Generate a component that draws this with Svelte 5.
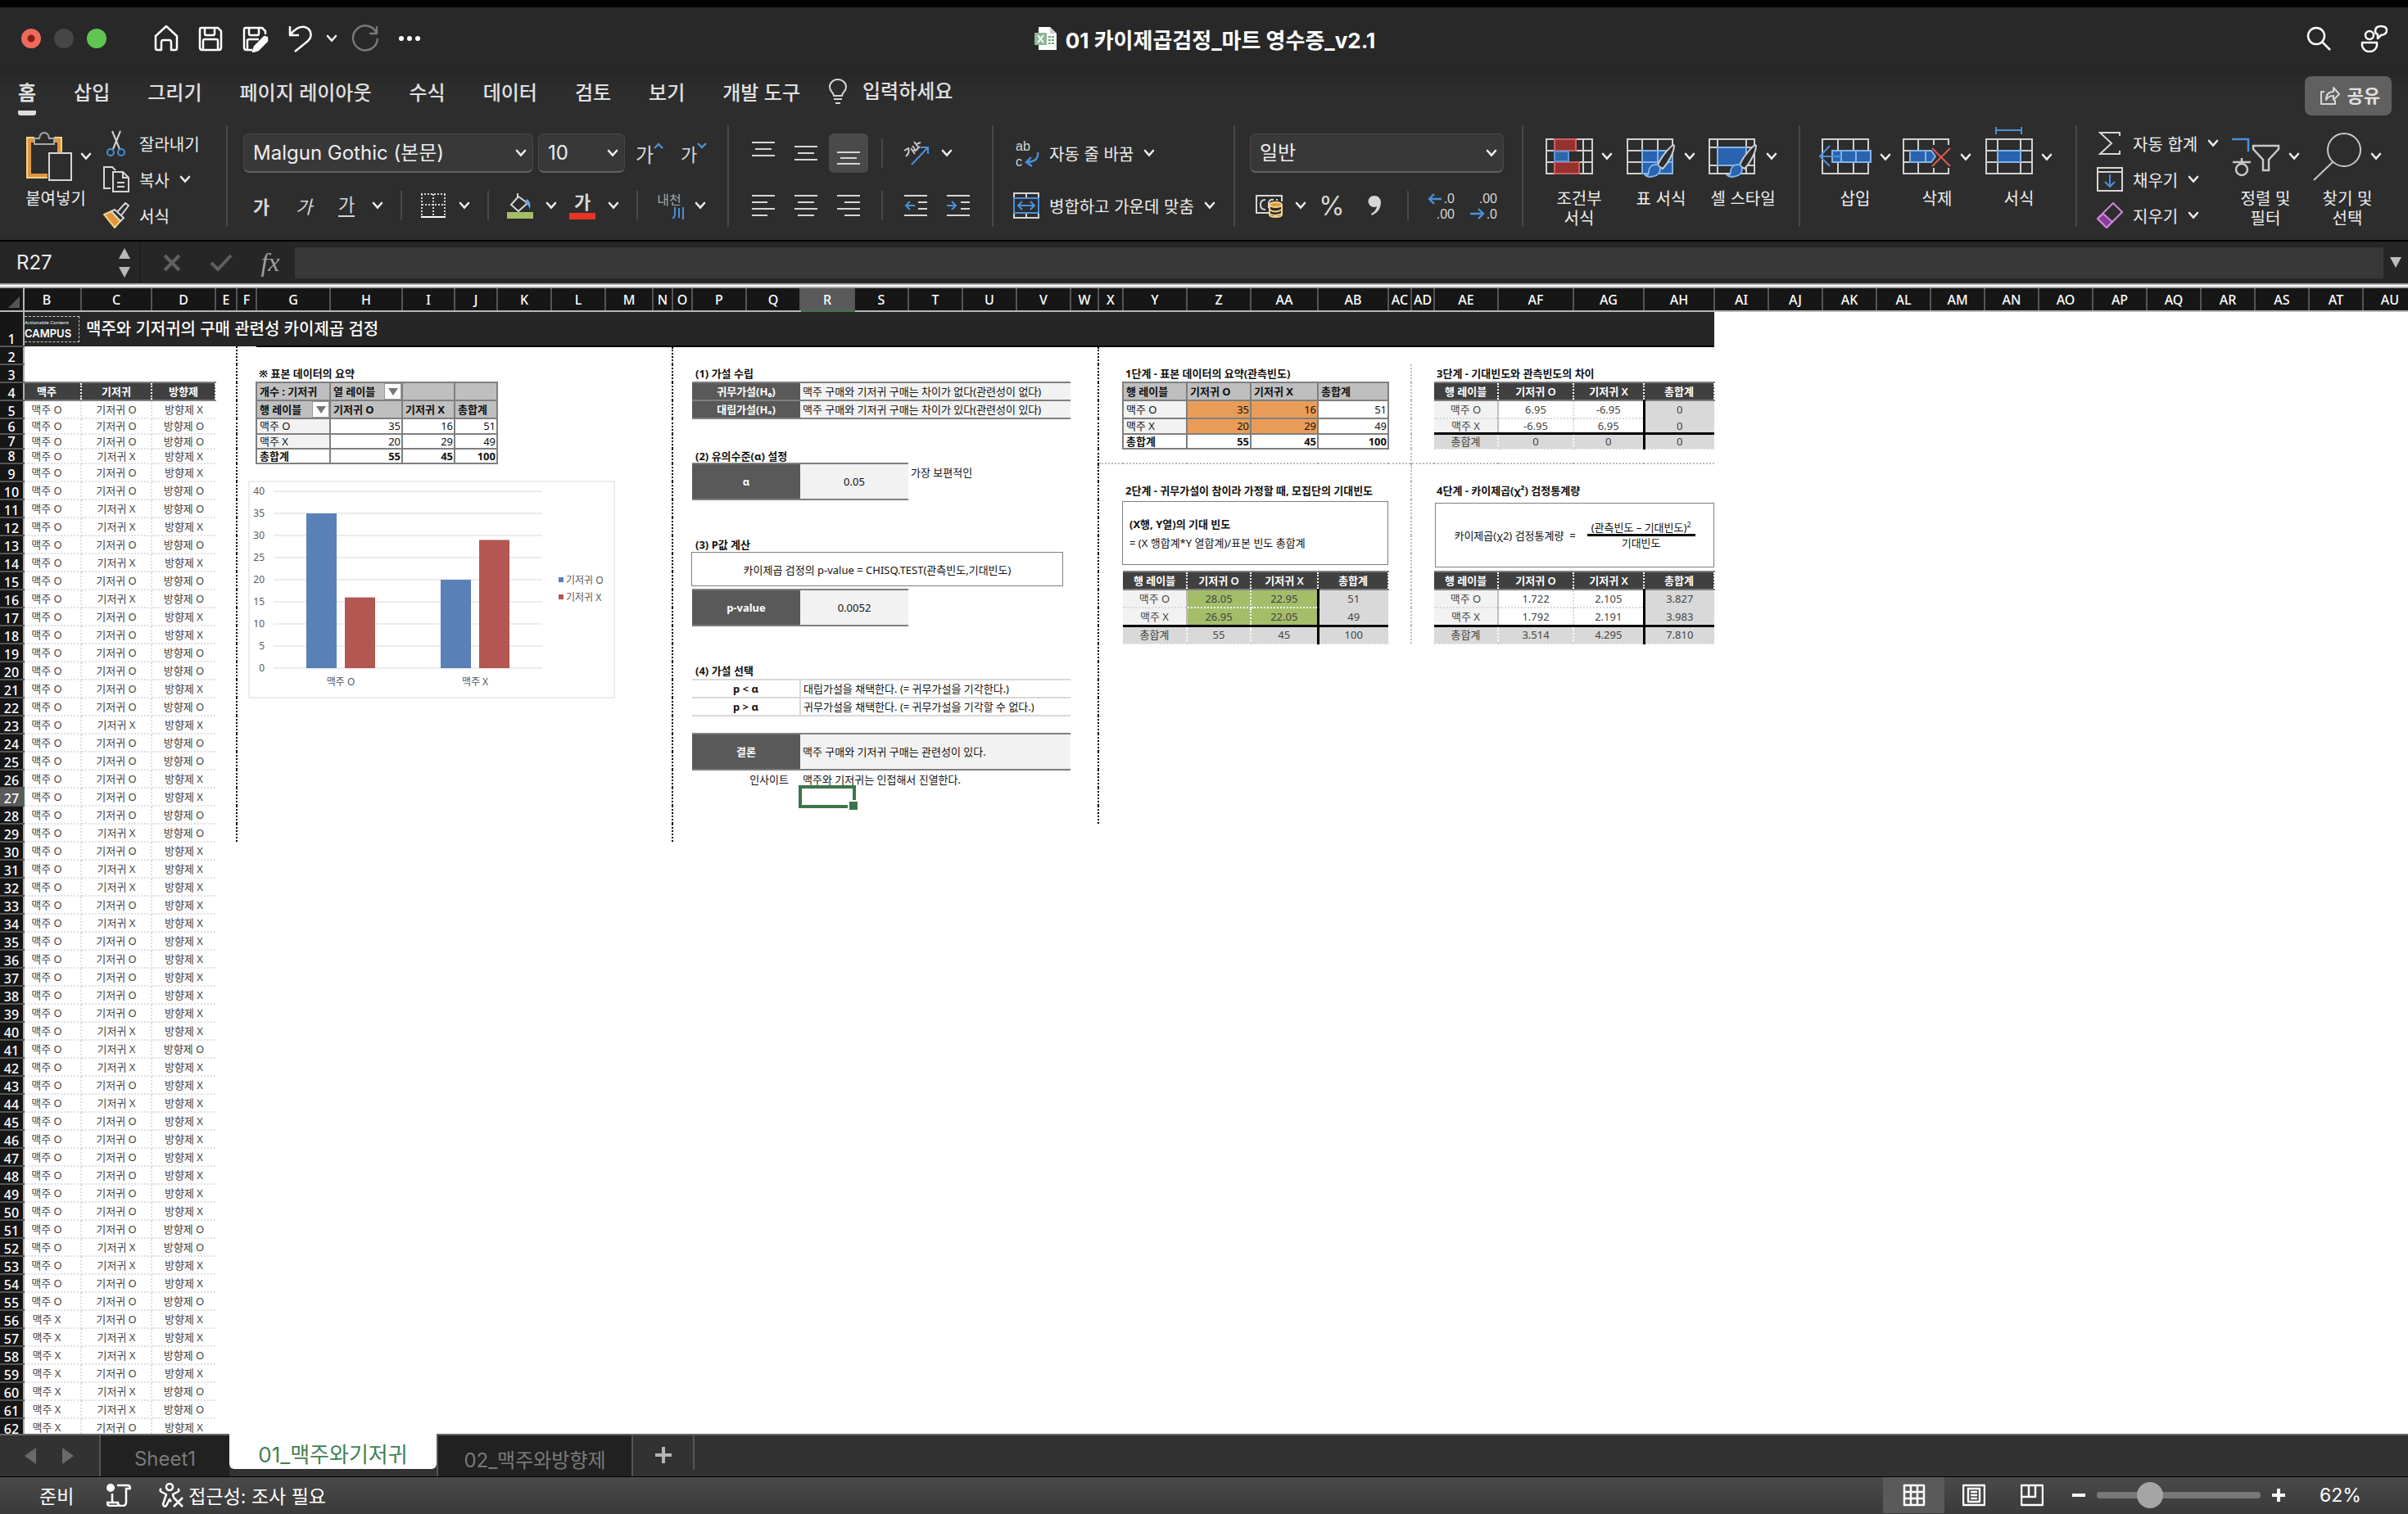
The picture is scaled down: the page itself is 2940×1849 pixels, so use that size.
<script>
  const widths = [
    70, 86, 78, 26, 24, 90, 88, 64, 52, 66, 66, 58, 24, 24, 66, 66, 66, 66, 66,
    66, 66, 34, 30, 78, 78, 82, 86, 28, 28, 78, 92, 86, 86,
    ...Array(13).fill(66),
  ];

  function colName(i) {
    const letter = (n) => String.fromCharCode(65 + n);
    return i < 26 ? letter(i) : letter(Math.floor(i / 26) - 1) + letter(i % 26);
  }

  // column A is scrolled out of view
  const cols = widths.map((w, i) => ({ name: colName(i + 1), w }));
  const colIndex = Object.fromEntries(cols.map((c, i) => [c.name, i]));
  const rows = Array.from({ length: 62 }, (_, i) => i + 1);

  const cells = {};
  const covered = new Set();

  function put(ref, text, cls = "", cs = 1, rs = 1) {
    const [, name, num] = ref.match(/([A-Z]+)(\d+)/);
    cells[ref] = { text, cls, cs, rs };
    for (let r = 0; r < rs; r++) {
      for (let c = 0; c < cs; c++) {
        if (r || c) covered.add(cols[colIndex[name] + c].name + (+num + r));
      }
    }
  }

  function putTable(startCol, startRow, data, styler) {
    data.forEach((line, r) =>
      line.forEach((text, c) =>
        put(cols[colIndex[startCol] + c].name + (startRow + r), text, styler(r, c)),
      ),
    );
  }

  // receipts
  const diapers = "OOOXOOXXOXOXOOOOOOX" + "OOOOOXOXXOXOOOOOXXXOXOOOOOOOXXOOOXXOXXO";
  const fresheners = "XOOXXOOXOXOOXXOOXOX" + "OOXXOOXXXXXXXXXXXOXXXXXXXXXOOXXOXXOXOOX";
  put("B4", "맥주", "dark first");
  put("C4", "기저귀", "dark");
  put("D4", "방향제", "dark");
  for (let i = 0; i < 58; i++) {
    put("B" + (i + 5), "맥주 " + (i < 51 ? "O" : "X"), "data first");
    put("C" + (i + 5), "기저귀 " + diapers[i], "data");
    put("D" + (i + 5), "방향제 " + fresheners[i], "data last");
  }

  // pivot
  put("C1", "맥주와 기저귀의 구매 관련성 카이제곱 검정", "title");
  put("G3", "※ 표본 데이터의 요약", "bold");
  putTable(
    "G",
    4,
    [
      ["개수 : 기저귀", "열 레이블", "", ""],
      ["행 레이블", "기저귀 O", "기저귀 X", "총합계"],
      ["맥주 O", "35", "16", "51"],
      ["맥주 X", "20", "29", "49"],
      ["총합계", "55", "45", "100"],
    ],
    (r, c) =>
      "pivot" +
      (r < 2 ? " head" : r === 4 ? " bold" : c === 0 ? " label" : "") +
      (r > 1 && c > 0 ? " num" : ""),
  );

  // hypothesis test
  put("P3", "(1) 가설 수립", "bold indent");
  put("P4", "귀무가설(H₀)", "key", 2);
  put("R4", "맥주 구매와 기저귀 구매는 차이가 없다(관련성이 없다)", "value", 5);
  put("P5", "대립가설(Hₐ)", "key", 2);
  put("R5", "맥주 구매와 기저귀 구매는 차이가 있다(관련성이 있다)", "value", 5);
  put("P8", "(2) 유의수준(α) 설정", "bold indent");
  put("P9", "α", "key", 2, 2);
  put("R9", "0.05", "value center", 2, 2);
  put("T9", "가장 보편적인", "");
  put("P13", "(3) P값 계산", "bold indent");
  put("P16", "p-value", "key", 2, 2);
  put("R16", "0.0052", "value center", 2, 2);
  put("P20", "(4) 가설 선택", "bold indent");
  put("P21", "p < α", "rule bold center", 2);
  put("R21", "대립가설을 채택한다. (= 귀무가설을 기각한다.)", "rule", 5);
  put("P22", "p > α", "rule bold center", 2);
  put("R22", "귀무가설을 채택한다. (= 귀무가설을 기각할 수 없다.)", "rule", 5);
  put("P24", "결론", "key", 2, 2);
  put("R24", "맥주 구매와 기저귀 구매는 관련성이 있다.", "value", 5, 2);
  put("Q26", "인사이트", "note");
  put("R26", "맥주와 기저귀는 인접해서 진열한다.", "");

  // steps
  put("Y3", "1단계 - 표본 데이터의 요약(관측빈도)", "bold");
  putTable(
    "Y",
    4,
    [
      ["행 레이블", "기저귀 O", "기저귀 X", "총합계"],
      ["맥주 O", "35", "16", "51"],
      ["맥주 X", "20", "29", "49"],
      ["총합계", "55", "45", "100"],
    ],
    (r, c) =>
      "pivot" +
      (r === 0 ? " head" : r === 3 ? " bold" : c === 0 ? " label" : "") +
      (r > 0 && c > 0 ? " num" : "") +
      ((r === 1 || r === 2) && (c === 1 || c === 2) ? " orange" : ""),
  );

  function calcStyle(fill) {
    return (r, c) => {
      if (r === 0) return "dark";
      let cls = "calc";
      if (r === 3 || c === 3) cls += " total";
      else if (c === 0) cls += " label";
      else cls += " " + fill;
      if (r === 3) cls += " sum";
      if (c === 3) cls += " edge";
      return cls;
    };
  }

  const calcHead = ["행 레이블", "기저귀 O", "기저귀 X", "총합계"];
  put("Y10", "2단계 - 귀무가설이 참이라 가정할 때, 모집단의 기대빈도", "bold");
  putTable(
    "Y",
    15,
    [
      calcHead,
      ["맥주 O", "28.05", "22.95", "51"],
      ["맥주 X", "26.95", "22.05", "49"],
      ["총합계", "55", "45", "100"],
    ],
    calcStyle("green"),
  );
  put("AE3", "3단계 - 기대빈도와 관측빈도의 차이", "bold");
  putTable(
    "AE",
    4,
    [
      calcHead,
      ["맥주 O", "6.95", "-6.95", "0"],
      ["맥주 X", "-6.95", "6.95", "0"],
      ["총합계", "0", "0", "0"],
    ],
    calcStyle("plain"),
  );
  put("AE10", "4단계 - 카이제곱(χ²) 검정통계량", "bold");
  putTable(
    "AE",
    15,
    [
      calcHead,
      ["맥주 O", "1.722", "2.105", "3.827"],
      ["맥주 X", "1.792", "2.191", "3.983"],
      ["총합계", "3.514", "4.295", "7.810"],
    ],
    calcStyle("plain"),
  );

  function frame(name, r) {
    const i = colIndex[name];
    let cls = "";
    if (r === 1 && i <= colIndex.AH) cls += " banner";
    if (r === 1 && i >= colIndex.G && i <= colIndex.AH) cls += " banner-line";
    if (r > 1 && r < 30 && (name === "F" || name === "O")) cls += " divide";
    if (r > 1 && r < 29 && name === "X") cls += " divide";
    if (r > 2 && r < 19 && name === "AD") cls += " split";
    if (r === 9 && i >= colIndex.X && i <= colIndex.AH) cls += " step-line";
    return cls;
  }

  const rowHeight = (r) => (r === 1 ? "tall" : r > 5 && r < 9 ? "short" : "");

  const menu = ["홈", "삽입", "그리기", "페이지 레이아웃", "수식", "데이터", "검토", "보기", "개발 도구"];

  const chart = [
    { name: "맥주 O", x: 71, values: [35, 16] },
    { name: "맥주 X", x: 235, values: [20, 29] },
  ];
  const barY = (v) => 229 - v * 5.4;

  let zoom = $state(29);
</script>

{#snippet chev()}
  <svg class="chev" width="14" height="10" viewBox="0 0 14 10"><path d="M2 2l5 5.5L12 2" fill="none" stroke="#eee" stroke-width="2.6" stroke-linecap="round" /></svg>
{/snippet}

{#snippet lines(list)}
  <svg width="28" height="28" viewBox="0 0 28 28">
    {#each list as [x, y, w]}<path d="M{x} {y}h{w}" stroke="#d6d6d6" stroke-width="2" />{/each}
  </svg>
{/snippet}

{#snippet brush()}
  <path d="M57 16c-5 3-16 16-19 25l6 4c6-6 14-20 14-28z" fill="#2d2d2d" stroke="#d0d0d0" stroke-width="2" />
  <path d="M36 40c-6 0-9 4-9 9 0 3-2 4-4 4 3 3 17 3 18-7 0-3-2-6-5-6z" fill="#2a63b0" stroke="#82b4e8" stroke-width="2" />
{/snippet}

<div class="app">
  <header class="titlebar">
    <div class="left">
      <div class="lights"><i class="red"></i><i></i><i class="green"></i></div>
      <button aria-label="홈 화면"><svg width="30" height="34" viewBox="0 0 30 34" class="line"><path d="M2 14L15 2l13 12v15q0 2-2 2h-5v-9q0-3-2-3h-8q-2 0-2 3v9H4q-2 0-2-2z" /></svg></button>
      <button aria-label="저장"><svg width="30" height="34" viewBox="0 0 30 34" class="line"><path d="M2 6q0-2 2-2h20l4 4v20q0 3-3 3H5q-3 0-3-3zM8 4v7q0 2 2 2h8q2 0 2-2V4M6 31V20q0-2 2-2h14q2 0 2 2v11" /></svg></button>
      <button aria-label="다른 이름으로 저장"><svg width="32" height="34" viewBox="0 0 32 34" class="line"><path d="M28 12V8l-4-4H4Q2 4 2 6v22q0 3 3 3h7M8 4v7q0 2 2 2h8q2 0 2-2V4M6 31V20q0-2 2-2h12" /><path d="M30 16l-3-1-12 12-2 6 6-2 11-11z" fill="#fff" /></svg></button>
      <div class="split-btn">
        <button aria-label="실행 취소"><svg width="30" height="34" viewBox="0 0 30 34" class="line"><path d="M2 2v11h11M2 13C8 5 14 2 20 3c8 2 10 11 4 17L8 33" /></svg></button>
        <button aria-label="실행 취소 목록">{@render chev()}</button>
      </div>
      <button aria-label="다시 실행"><svg width="34" height="34" viewBox="0 0 34 34" class="line off"><path d="M31 2v9h-9M31 11a15 15 0 1 0 1 6" /></svg></button>
      <button aria-label="더 보기"><svg width="26" height="8" viewBox="0 0 26 8"><circle cx="3" cy="4" r="3" fill="#fff" /><circle cx="13" cy="4" r="3" fill="#fff" /><circle cx="23" cy="4" r="3" fill="#fff" /></svg></button>
    </div>
    <h1>
      <svg width="28" height="30" viewBox="0 0 28 30"><path d="M5 1h14l8 8v20H5z" fill="#fff" /><path d="M19 1v8h8z" fill="#ccc" /><rect y="8" width="15" height="15" rx="1" fill="#8fb598" /><path d="M4 11l7 9M11 11l-7 9" stroke="#fff" stroke-width="2" /><path d="M17 13h7M17 17h7M17 21h7" stroke="#6fa17e" stroke-width="2" stroke-dasharray="3 1" /></svg>
      01 카이제곱검정_마트 영수증_v2.1
    </h1>
    <div class="right">
      <button aria-label="검색"><svg width="30" height="32" viewBox="0 0 30 32" class="line"><circle cx="12" cy="13" r="10" /><path d="M19 20l10 10" /></svg></button>
      <button aria-label="메모"><svg width="34" height="34" viewBox="0 0 34 34" class="line"><circle cx="11" cy="13" r="5" /><path d="M2 22h18v4q-2 7-9 7t-9-7zM18 8q0-6 7-6t7 5-7 6l-4 4v-5q-3-1-3-4z" /></svg></button>
    </div>
  </header>

  <nav class="menu">
    {#each menu as item, i}
      <button class:active={i === 0}>{item}</button>
    {/each}
    <button class="tell"><svg width="24" height="32" viewBox="0 0 24 32" class="line thin"><path d="M7 21C7 17 2 16 2 10a10 9 0 0 1 20 0c0 6-5 7-5 11zM7 25h10M9 30h6" /></svg>입력하세요</button>
    <button class="share"><svg width="26" height="24" viewBox="0 0 26 24" class="line thin"><path d="M6 7H2v15h17v-5M8 17c0-7 3-10 9-10V2l7 8-7 7v-5c-4 0-7 1-9 5z" /></svg>공유</button>
  </nav>

  <div class="ribbon">
    <div class="group clipboard">
      <button class="big">
        <span class="pic"><svg width="56" height="62" viewBox="0 0 56 62"><path d="M10 11H3v44h23M34 11h7v15" fill="none" stroke="#e0963a" stroke-width="6" /><path d="M10 8H1v49h25M34 8h9v17" fill="none" stroke="#f5d28a" stroke-width="2" /><path d="M10 16V9h6q1-7 6-7t6 7h6v7z" fill="#2d2d2d" stroke="#a8a8a8" stroke-width="2" /><path d="M28 27h27v33H28z" fill="#2d2d2d" stroke="#d6d6d6" stroke-width="2" /></svg>{@render chev()}</span>
        붙여넣기
      </button>
      <div class="stack">
        <button><svg width="32" height="32" viewBox="0 0 32 32" fill="none" stroke-width="2"><path d="M11 1l9 22M21 1l-9 22" stroke="#d6d6d6" /><circle cx="9" cy="27" r="4" stroke="#4a90d9" /><circle cx="22" cy="27" r="4" stroke="#4a90d9" /></svg>잘라내기</button>
        <button><svg width="32" height="32" viewBox="0 0 32 32" fill="none" stroke="#d6d6d6" stroke-width="2"><path d="M9 27H1V1h10l4 4M12 7h12l7 7v17H12zM24 7v7h7M17 20h9M17 25h9" /></svg>복사 {@render chev()}</button>
        <button><svg width="32" height="32" viewBox="0 0 32 32" stroke-width="2"><path d="M1 15l9-4 11 12-7 8z" fill="#e0963a" stroke="#f5d28a" /><path d="M10 11l4-2 11 10-4 4zM17 12L27 1l4 3-9 12" fill="#2d2d2d" stroke="#d6d6d6" /></svg>서식</button>
      </div>
    </div>
    <span class="sep"></span>

    <div class="group rows font-group">
      <div class="row pickers">
        <div class="picker wide"><select aria-label="글꼴"><option>Malgun Gothic (본문)</option></select>{@render chev()}</div>
        <div class="picker small"><select aria-label="글꼴 크기"><option>10</option></select>{@render chev()}</div>
        <button class="tool grow">가<svg width="12" height="8" viewBox="0 0 12 8"><path d="M1 7l5-5 5 5" fill="none" stroke="#4a90d9" stroke-width="2.4" /></svg></button>
        <button class="tool grow less">가<svg width="12" height="8" viewBox="0 0 12 8"><path d="M1 1l5 5 5-5" fill="none" stroke="#4a90d9" stroke-width="2.4" /></svg></button>
      </div>
      <div class="row">
        <div class="set"><button class="tool b">가</button><button class="tool i">가</button><button class="tool"><span class="u">가</span></button></div>
        <button class="drop" aria-label="밑줄 목록">{@render chev()}</button>
        <span class="bar"></span>
        <button class="tool" aria-label="테두리"><svg width="32" height="32" viewBox="0 0 32 32" fill="none" stroke="#d6d6d6" stroke-width="2"><path d="M1 2h30M2 2v26M30 2v26M16 2v26M2 15h28" stroke-dasharray="2 2" /><path d="M1 30h30" stroke="#fff" /></svg></button>
        <button class="drop" aria-label="테두리 목록">{@render chev()}</button>
        <span class="bar"></span>
        <button class="tool" aria-label="채우기 색"><svg width="34" height="34" viewBox="0 0 34 34"><path d="M14 2v6M15 6L6 16l9 8 11-10z" fill="none" stroke="#d6d6d6" stroke-width="2" /><path d="M25 9q6 3 4 13-2-7-6-8z" fill="#6aa6e0" /><path d="M1 25h32v8H1z" fill="#a3bd69" /></svg></button>
        <button class="drop" aria-label="채우기 색 목록">{@render chev()}</button>
        <button class="tool color">가<i></i></button>
        <button class="drop" aria-label="글꼴 색 목록">{@render chev()}</button>
        <span class="bar"></span>
        <button class="tool ruby">내천<svg width="14" height="15" viewBox="0 0 14 15"><path d="M3 0v8q0 4-3 6M8 1v12M13 0v15" fill="none" stroke="#4a90d9" stroke-width="2" /></svg></button>
        <button class="drop" aria-label="윗주 목록">{@render chev()}</button>
      </div>
    </div>
    <span class="sep"></span>

    <div class="group rows align-group">
      <div class="row">
        <div class="set">
          <button class="tool" aria-label="위쪽 맞춤">{@render lines([[0, 1, 28], [4, 9, 20], [0, 17, 28]])}</button>
          <button class="tool" aria-label="가운데 맞춤">{@render lines([[0, 6, 28], [4, 14, 20], [0, 22, 28]])}</button>
          <button class="tool on" aria-label="아래쪽 맞춤">{@render lines([[0, 13, 28], [4, 20, 20], [0, 27, 28]])}</button>
        </div>
        <span class="bar"></span>
        <button class="tool" aria-label="방향"><svg width="34" height="32" viewBox="0 0 34 32" fill="none" stroke-width="2"><path d="M3 13l5-3q2 6-3 10M11 10l5 7M13 14l4-3M13 7l4 6 5-5M15 2l6 8M18 5l5-2" stroke="#c8c8c8" /><path d="M12 30L32 9M23 9h9v8" stroke="#4a90d9" /></svg></button>
        <button class="drop" aria-label="방향 목록">{@render chev()}</button>
      </div>
      <div class="row">
        <div class="set">
          <button class="tool" aria-label="왼쪽 맞춤">{@render lines([[0, 2, 28], [0, 10, 19], [0, 18, 28], [0, 26, 19]])}</button>
          <button class="tool" aria-label="가운데">{@render lines([[0, 2, 28], [4, 10, 20], [0, 18, 28], [4, 26, 20]])}</button>
          <button class="tool" aria-label="오른쪽 맞춤">{@render lines([[0, 2, 28], [9, 10, 19], [0, 18, 28], [9, 26, 19]])}</button>
        </div>
        <span class="bar"></span>
        <div class="set">
          <button class="tool" aria-label="내어쓰기"><svg width="28" height="28" viewBox="0 0 28 28" fill="none" stroke="#d6d6d6" stroke-width="2"><path d="M0 2h28M17 10h11M17 18h11M0 26h28" /><path d="M13 14H2M7 9l-5 5 5 5" stroke="#4a90d9" /></svg></button>
          <button class="tool" aria-label="들여쓰기"><svg width="28" height="28" viewBox="0 0 28 28" fill="none" stroke="#d6d6d6" stroke-width="2"><path d="M0 2h28M17 10h11M17 18h11M0 26h28" /><path d="M0 14h11M6 9l5 5-5 5" stroke="#4a90d9" /></svg></button>
        </div>
      </div>
    </div>
    <span class="sep"></span>

    <div class="group rows wrap-group">
      <div class="row"><button class="labelled"><svg class="glyphs" width="32" height="40" viewBox="0 0 32 40"><text x="3" y="17">ab</text><text x="3" y="36">c</text><path d="M30 19q2 11-13 12M22 25l-6 6 7 5" fill="none" stroke="#4a90d9" stroke-width="2.4" /></svg>자동 줄 바꿈 {@render chev()}</button></div>
      <div class="row"><button class="labelled"><svg width="32" height="32" viewBox="0 0 32 32" fill="none" stroke="#d6d6d6" stroke-width="2"><path d="M1 1h30v30H1zM16 1v6M16 25v6" /><path d="M1 7h30v18H1zM6 16h20M11 11l-5 5 5 5M21 11l5 5-5 5" stroke="#4a90d9" /></svg>병합하고 가운데 맞춤 {@render chev()}</button></div>
    </div>
    <span class="sep"></span>

    <div class="group rows number-group">
      <div class="row"><div class="picker format"><select aria-label="표시 형식"><option>일반</option></select>{@render chev()}</div></div>
      <div class="row">
        <button class="tool" aria-label="회계 형식"><svg width="34" height="30" viewBox="0 0 34 30" fill="none" stroke="#d6d6d6" stroke-width="2"><path d="M16 24H1V3h31v7M12 8q-6 0-6 6t6 6M22 8q-5-1-6 4v6M27 8h-2" /><path d="M17 14v12q0 3 7.500 3t7.500-3V14" fill="#2d2d2d" stroke="#f5d28a" /><ellipse cx="24.500" cy="14" rx="7.500" ry="3" fill="#e0963a" stroke="#f5d28a" /><path d="M17 20q7 5 15 0M17 25q7 4 15 0" stroke="#f5d28a" /></svg></button>
        <button class="drop" aria-label="회계 형식 목록">{@render chev()}</button>
        <div class="set">
          <button class="tool percent">%</button>
          <button class="tool" aria-label="쉼표 스타일"><svg width="18" height="28" viewBox="0 0 18 28"><path d="M9 2a7 7 0 0 0-1 14q3 0 4-1-1 6-7 9l1 2Q17 21 17 10 16 2 9 2z" fill="#d6d6d6" /></svg></button>
        </div>
        <span class="bar"></span>
        <div class="set">
          <button class="tool" aria-label="자릿수 늘림"><svg class="glyphs" width="34" height="40" viewBox="0 0 34 40"><text x="33" y="17" text-anchor="end">.0</text><text x="33" y="36" text-anchor="end">.00</text><path d="M17 12H2M8 6l-6 6 6 6" fill="none" stroke="#4a90d9" stroke-width="2.4" /></svg></button>
          <button class="tool" aria-label="자릿수 줄임"><svg class="glyphs" width="34" height="40" viewBox="0 0 34 40"><text x="33" y="17" text-anchor="end">.00</text><text x="33" y="36" text-anchor="end">.0</text><path d="M0 30h16M10 24l6 6-6 6" fill="none" stroke="#4a90d9" stroke-width="2.4" /></svg></button>
        </div>
      </div>
    </div>
    <span class="sep"></span>

    <div class="group style-group">
      <button class="big">
        <span class="pic"><svg width="58" height="60" viewBox="0 0 58 60" fill="none" stroke="#d0d0d0" stroke-width="2"><path d="M1 9h56v42H1zM1 23h56M1 37h56M11 9v42M46 9v42" /><path d="M11 9h26v14H11zM11 37h30v14H11z" fill="#96322e" stroke="#d1605c" /><path d="M28 24h17v12H28z" fill="#2d2d2d" stroke="none" /><path d="M11 24h17v12H11z" fill="#2e66a8" stroke="#5b97d8" /></svg>{@render chev()}</span>
        조건부<br />서식
      </button>
      <button class="big">
        <span class="pic"><svg width="60" height="60" viewBox="0 0 60 60" fill="none" stroke="#d0d0d0" stroke-width="2"><path d="M1 9h55v42H1zM1 23h55M1 37h55M19 9v42M38 9v42" /><path d="M19 23h37v28H19z" fill="#2a63b0" stroke="#82b4e8" /><path d="M19 37h37M38 23v28" stroke="#82b4e8" />{@render brush()}</svg>{@render chev()}</span>
        표 서식
      </button>
      <button class="big">
        <span class="pic"><svg width="60" height="60" viewBox="0 0 60 60" fill="none" stroke="#d0d0d0" stroke-width="2"><path d="M1 9h55v42H1zM1 19h55M1 41h55M11 9v42M46 9v42" /><path d="M11 19h35v22H11z" fill="#2a63b0" stroke="#82b4e8" />{@render brush()}</svg>{@render chev()}</span>
        셀 스타일
      </button>
    </div>
    <span class="sep"></span>

    <div class="group cell-group">
      <button class="big">
        <span class="pic"><svg width="64" height="60" viewBox="0 0 64 60" fill="none" stroke="#d0d0d0" stroke-width="2"><path d="M4 9h56v42H4zM23 9v42M42 9v42" /><path d="M16 23h47v14H16z" fill="#2a63b0" stroke="#82b4e8" /><path d="M27 23v14M45 23v14" stroke="#82b4e8" /><path d="M27 30H1M13 17L1 30l12 12" stroke="#4a90d9" /></svg>{@render chev()}</span>
        삽입
      </button>
      <button class="big">
        <span class="pic"><svg width="60" height="60" viewBox="0 0 60 60" fill="none" stroke="#d0d0d0" stroke-width="2"><path d="M1 9h55v42H1zM1 23h55M1 37h55M19 9v42M38 9v42" /><path d="M32 16h26v28H32z" fill="#2d2d2d" stroke="none" /><path d="M9 23h26l5 7-5 7H9zM28 23v14" fill="#2a63b0" stroke="#82b4e8" /><path d="M36 20l22 22M58 20L36 42" stroke="#dc5a50" /></svg>{@render chev()}</span>
        삭제
      </button>
      <button class="big">
        <span class="pic"><svg width="58" height="66" viewBox="0 -6 58 66" fill="none" stroke="#d0d0d0" stroke-width="2"><path d="M1 9h56v42H1zM1 23h56M1 37h56M15 9v42M43 9v42" /><path d="M15 23h28v14H15z" fill="#2a63b0" stroke="#82b4e8" /><path d="M13-2h31M13-6v9M44-6v9" stroke="#4a90d9" /></svg>{@render chev()}</span>
        서식
      </button>
    </div>
    <span class="sep"></span>

    <div class="group edit-group">
      <div class="stack">
        <button><svg width="32" height="32" viewBox="0 0 32 32" fill="none" stroke="#d6d6d6" stroke-width="2"><path d="M28 7V3H4l14 13L4 29h24v-4" /></svg>자동 합계 {@render chev()}</button>
        <button><svg width="32" height="30" viewBox="0 0 32 30" fill="none" stroke="#d6d6d6" stroke-width="2"><path d="M1 1h30v28H1zM1 6h30" /><path d="M16 9v15M10 18l6 6 6-6" stroke="#4a90d9" /></svg>채우기 {@render chev()}</button>
        <button><svg width="32" height="32" viewBox="0 0 32 32" stroke="#c98bd8" stroke-width="2"><path d="M20 1l11 11-19 19L1 20z" fill="none" /><path d="M8 14L1 20l11 11 7-7z" fill="#8b3a9c" /></svg>지우기 {@render chev()}</button>
      </div>
      <button class="big">
        <span class="pic"><svg width="60" height="60" viewBox="0 0 60 60" fill="none" stroke="#c8c8c8" stroke-width="2.500"><path d="M1 9h20v15" stroke="#4a90d9" /><path d="M13 32v4M2 37h22" /><circle cx="13" cy="46" r="7" /><path d="M27 17h31v4L46 34v13h-7V34L27 21z" /></svg>{@render chev()}</span>
        정렬 및<br />필터
      </button>
      <button class="big">
        <span class="pic"><svg width="60" height="60" viewBox="0 0 60 60" fill="none" stroke="#c8c8c8" stroke-width="2"><circle cx="38" cy="22" r="20" /><path d="M24 37L1 59" /></svg>{@render chev()}</span>
        찾기 및<br />선택
      </button>
    </div>
  </div>

  <div class="formula">
    <div class="namebox">
      <input aria-label="이름 상자" value="R27" />
      <svg width="16" height="38" viewBox="0 0 16 38"><path d="M8 1l7 13H1zM8 37l7-13H1z" fill="#b8b8b8" /></svg>
    </div>
    <button aria-label="취소"><svg width="22" height="22" viewBox="0 0 22 22"><path d="M2 2l18 18M20 2L2 20" stroke="#606060" stroke-width="4" /></svg></button>
    <button aria-label="입력"><svg width="28" height="22" viewBox="0 0 28 22"><path d="M2 11l8 8L26 2" fill="none" stroke="#606060" stroke-width="4" /></svg></button>
    <button class="fx">fx</button>
    <input class="entry" aria-label="수식 입력줄" />
    <button class="expand" aria-label="수식 입력줄 확장"><svg width="14" height="13" viewBox="0 0 14 13"><path d="M0 0h14L7 13z" fill="#bdbdbd" /></svg></button>
  </div>

  <main class="sheet">
    <div class="canvas">
      <table>
        <colgroup>
          <col class="gutter" />
          {#each cols as c}<col style="width: {c.w}px" />{/each}
        </colgroup>
        <thead>
          <tr>
            <th class="corner"><svg width="14" height="14" viewBox="0 0 14 14"><path d="M14 0v14H0z" fill="#555" /></svg></th>
            {#each cols as c}
              <th scope="col" class:first={c.name === "B"} class:picked={c.name === "R"}>{c.name}</th>
            {/each}
          </tr>
        </thead>
        <tbody>
          {#each rows as r}
            <tr class={rowHeight(r)}>
              <th scope="row" class:picked={r === 27}>{r}</th>
              {#each cols as c}
                {@const ref = c.name + r}
                {@const cell = cells[ref]}
                {#if ref === "B1"}
                  <td class="banner logo"><div><small>Actionable Content</small><b>CAMPUS</b></div></td>
                {:else if ref === "H4" || ref === "G5"}
                  <td class={cell.cls}><div class="filter">{cell.text}<button aria-label="{cell.text} 필터"><svg width="12" height="9" viewBox="0 0 12 9"><path d="M0 0h12L6 9z" fill="#777" /></svg></button></div></td>
                {:else if ref === "R27"}
                  <td class="cursor"><span></span></td>
                {:else if !covered.has(ref)}
                  <td class={(cell?.cls ?? "") + frame(c.name, r)} colspan={cell?.cs} rowspan={cell?.rs}>{cell?.text ?? ""}</td>
                {/if}
              {/each}
            </tr>
          {/each}
        </tbody>
      </table>

      <svg class="chart" width="448" height="266" viewBox="0 0 448 266">
        <rect x="1" y="1" width="446" height="264" fill="#fff" stroke="#d9d9d9" />
        {#each [0, 5, 10, 15, 20, 25, 30, 35, 40] as tick}
          <path d="M31 {barY(tick)}h328" stroke="#d9d9d9" />
          <text x="20" y={barY(tick) + 4} text-anchor="end">{tick}</text>
        {/each}
        {#each chart as g}
          <rect x={g.x} y={barY(g.values[0])} width="37" height={g.values[0] * 5.4} fill="#5a80b8" />
          <rect x={g.x + 47} y={barY(g.values[1])} width="37" height={g.values[1] * 5.4} fill="#b25752" />
          <text x={g.x + 42} y="250" text-anchor="middle">{g.name}</text>
        {/each}
        <rect x="379" y="118" width="6" height="6" fill="#5a80b8" /><text x="388" y="126">기저귀 O</text>
        <rect x="379" y="139" width="6" height="6" fill="#b25752" /><text x="388" y="147">기저귀 X</text>
      </svg>
      <div class="box pvalue">카이제곱 검정의 p-value = CHISQ.TEST(관측빈도,기대빈도)</div>
      <div class="box expected"><b>(X행, Y열)의 기대 빈도</b><span>= (X 행합계*Y 열합계)/표본 빈도 총합계</span></div>
      <div class="box chi">
        <span>카이제곱(χ2) 검정통계량&nbsp; =</span>
        <span class="fraction"><span>(관측빈도 – 기대빈도)<sup>2</sup></span><span>기대빈도</span></span>
      </div>
    </div>
  </main>

  <nav class="tabs">
    <div class="arrows">
      <button aria-label="이전 시트"><svg width="14" height="20" viewBox="0 0 14 20"><path d="M14 0v20L0 10z" fill="#6a6a6a" /></svg></button>
      <button aria-label="다음 시트"><svg width="14" height="20" viewBox="0 0 14 20"><path d="M0 0v20l14-10z" fill="#6a6a6a" /></svg></button>
    </div>
    <button class="tab one">Sheet1</button>
    <button class="tab two active">01_맥주와기저귀</button>
    <button class="tab three">02_맥주와방향제</button>
    <button class="add" aria-label="시트 추가"><svg width="20" height="20" viewBox="0 0 20 20"><path d="M10 0v20M0 10h20" stroke="#b4b4b4" stroke-width="4" /></svg></button>
  </nav>

  <footer class="status">
    <span class="ready">준비</span>
    <button aria-label="매크로 기록"><svg width="30" height="28" viewBox="0 0 30 28"><circle cx="5" cy="5" r="5" fill="#fff" /><path d="M13 2h13q3 0 3 4h-5v16q0 5-4 5H4q-3 0-3-4h13q0 4 3 4M7 12v10M13 2h8" fill="none" stroke="#fff" stroke-width="2.500" /></svg></button>
    <button class="access"><svg width="30" height="30" viewBox="0 0 30 30" class="line"><circle cx="13" cy="5" r="4" /><path d="M3 7q-3 2 0 4l6 3-4 12q1 4 4 2l4-8 2 3M23 7q3 2 0 4l-6 3 1 4M18 18l11 11M29 18L18 29" /></svg>접근성: 조사 필요</button>
    <div class="views">
      <button class="on" aria-label="기본"><svg width="28" height="28" viewBox="0 0 28 28" class="line"><path d="M2 2h24v24H2zM10 2v24M18 2v24M2 10h24M2 18h24" /></svg></button>
      <button aria-label="페이지 레이아웃 보기"><svg width="28" height="28" viewBox="0 0 28 28" class="line"><path d="M1 2h26v24H1zM7 6h14v16H7zM10 10h8M10 14h8M10 18h8" /></svg></button>
      <button aria-label="페이지 나누기 미리 보기"><svg width="28" height="28" viewBox="0 0 28 28" class="line"><path d="M1 2h26v24H1zM1 16h17V2M10 2v14" /></svg></button>
    </div>
    <button class="step" aria-label="축소"><svg width="16" height="16" viewBox="0 0 16 16"><path d="M0 8h16" stroke="#fff" stroke-width="4" /></svg></button>
    <input type="range" min="0" max="100" bind:value={zoom} aria-label="확대/축소" />
    <button class="step" aria-label="확대"><svg width="16" height="16" viewBox="0 0 16 16"><path d="M0 8h16M8 0v16" stroke="#fff" stroke-width="4" /></svg></button>
    <span class="zoom-value">62%</span>
  </footer>
</div>

<style>
  :global(body) {
    margin: 0;
    background: #000;
  }

  .app {
    display: flex;
    flex-direction: column;
    height: 100vh;
    box-sizing: border-box;
    border-top: 9px solid #000;
    overflow: hidden;
    background: #2d2d2d;
    color: #eee;
    font-family: Inter, "Noto Sans CJK KR", sans-serif;
    font-size: 20px;
  }

  button,
  input,
  select {
    margin: 0;
    padding: 0;
    border: none;
    background: none;
    color: inherit;
    font: inherit;
    box-sizing: border-box;
  }

  svg {
    display: block;
    flex: none;
  }

  .line {
    fill: none;
    stroke: #fff;
    stroke-width: 2.5;
    stroke-linejoin: round;
  }

  .line.thin {
    stroke: #d6d6d6;
    stroke-width: 2;
  }

  .line.off {
    stroke: #777;
  }

  .glyphs {
    font-family: "Liberation Sans", sans-serif;
    font-size: 16px;
  }

  .glyphs text {
    fill: #d6d6d6;
  }

  /* title bar */
  .titlebar {
    flex: none;
    display: grid;
    grid-template-columns: 1fr auto 1fr;
    align-items: center;
    height: 76px;
    padding: 0 24px 0 26px;
    background: #282828;
  }

  .left,
  .right,
  .lights,
  .split-btn {
    display: flex;
    align-items: center;
  }

  .left {
    gap: 24px;
  }

  .right {
    gap: 36px;
    justify-content: flex-end;
  }

  .lights {
    gap: 16px;
    margin-right: 34px;
  }

  .split-btn {
    gap: 16px;
    margin-right: -7px;
  }

  .lights i {
    width: 24px;
    height: 24px;
    border-radius: 50%;
    background: #464646;
  }

  .lights .red {
    background: radial-gradient(#8c1a10 4px, #ed6a5e 5px);
  }

  .lights .green {
    background: #61c554;
  }

  h1 {
    display: flex;
    align-items: center;
    gap: 10px;
    margin: 0;
    font-size: 26px;
    font-weight: 700;
    color: #fff;
  }

  /* menu */
  .menu {
    flex: none;
    display: flex;
    align-items: flex-start;
    gap: 46px;
    height: 68px;
    box-sizing: border-box;
    padding: 8px 20px 0 22px;
    background: linear-gradient(#262626, #2d2d2d 24px);
    font-size: 24px;
    font-weight: 500;
    color: #e0e0e0;
  }

  .menu button {
    height: 42px;
    line-height: 36px;
  }

  .menu .active {
    height: 48px;
    border-bottom: 6px solid #ddd;
    border-radius: 0 0 3px 3px;
    font-weight: 700;
  }

  .menu .tell {
    display: flex;
    align-items: center;
    gap: 18px;
    height: 38px;
    margin-left: -12px;
  }

  .menu .share {
    display: flex;
    align-items: center;
    gap: 8px;
    height: 48px;
    margin-left: auto;
    padding: 0 14px 0 18px;
    border-radius: 8px;
    background: #606060;
    font-size: 22px;
    font-weight: 700;
  }

  /* ribbon */
  .ribbon {
    flex: none;
    display: flex;
    align-items: flex-start;
    height: 140px;
    border-bottom: 2px solid #000;
  }

  .sep {
    width: 2px;
    height: 124px;
    background: #484848;
  }

  .group {
    display: flex;
    flex: none;
    box-sizing: border-box;
  }

  .rows {
    flex-direction: column;
    gap: 16px;
    padding-top: 10px;
  }

  .row {
    display: flex;
    align-items: center;
    height: 48px;
  }

  .clipboard {
    width: 276px;
    gap: 12px;
    padding-left: 22px;
  }

  .font-group {
    width: 610px;
    padding-left: 17px;
  }

  .pickers {
    gap: 6px;
    padding-left: 2px;
  }

  .align-group {
    width: 321px;
    padding-left: 18px;
  }

  .wrap-group {
    width: 293px;
    padding-left: 24px;
  }

  .number-group {
    width: 350px;
    padding-left: 18px;
  }

  .style-group {
    width: 336px;
    padding-left: 18px;
  }

  .cell-group {
    width: 336px;
    padding-left: 17px;
  }

  .edit-group {
    padding-left: 24px;
  }

  .edit-group .stack {
    width: 156px;
  }

  .big {
    display: flex;
    flex-direction: column;
    align-items: center;
    width: 100px;
    padding-top: 8px;
    line-height: 24px;
  }

  .clipboard .big {
    width: 92px;
  }

  .pic {
    display: flex;
    align-items: center;
    gap: 10px;
    height: 60px;
    margin-bottom: 10px;
  }

  .clipboard .pic {
    padding-left: 8px;
  }

  .cell-group .pic {
    align-items: flex-end;
  }

  .cell-group .chev {
    margin-bottom: 24px;
  }

  .stack button,
  .labelled {
    display: flex;
    align-items: center;
    gap: 12px;
    height: 44px;
    white-space: nowrap;
  }

  .set {
    display: flex;
    gap: 4px;
  }

  .tool {
    display: flex;
    align-items: center;
    justify-content: center;
    flex: none;
    width: 48px;
    height: 48px;
    font-size: 22px;
    color: #d6d6d6;
  }

  .tool.on {
    border-radius: 6px;
    background: #4a4a4a;
  }

  .tool.b {
    font-weight: 700;
  }

  .tool.i {
    font-style: italic;
  }

  .u {
    border-bottom: 2px solid #d6d6d6;
    line-height: 26px;
  }

  .grow {
    font-size: 24px;
  }

  .grow.less {
    font-size: 22px;
  }

  .grow svg {
    margin-bottom: 18px;
  }

  .color {
    flex-direction: column;
    font-weight: 700;
    line-height: 26px;
  }

  .color i {
    width: 32px;
    height: 8px;
    background: #ea3323;
  }

  .ruby {
    flex-direction: column;
    align-items: center;
    font-size: 16px;
    line-height: 18px;
    color: #a8a8a8;
  }

  .ruby svg {
    align-self: flex-end;
    margin-right: 6px;
  }

  .tool.percent {
    font-size: 32px;
  }

  .drop {
    display: flex;
    align-items: center;
    justify-content: center;
    width: 28px;
    height: 48px;
  }

  .bar {
    width: 2px;
    height: 36px;
    margin: 0 14px;
    background: #484848;
  }

  .align-group .bar,
  .number-group .bar {
    margin: 0 16px;
  }

  .picker {
    display: grid;
    align-items: center;
    height: 48px;
    box-sizing: border-box;
    border: 1px solid #484848;
    border-bottom: 2px solid #606060;
    border-radius: 7px;
    background: #383838;
    font-size: 24px;
  }

  .picker select,
  .picker svg {
    grid-area: 1 / 1;
  }

  .picker select {
    appearance: none;
    height: 44px;
    padding-left: 11px;
  }

  .picker svg {
    justify-self: end;
    margin-right: 7px;
    pointer-events: none;
  }

  .wide {
    width: 354px;
  }

  .small {
    width: 106px;
  }

  .format {
    width: 310px;
  }

  /* formula bar */
  .formula {
    flex: none;
    display: flex;
    align-items: center;
    height: 51px;
    background: #262626;
  }

  .namebox {
    display: flex;
    align-items: center;
    justify-content: space-between;
    width: 172px;
    height: 51px;
    box-sizing: border-box;
    padding: 0 10px 0 20px;
    border-right: 2px solid #1e1e1e;
    font-size: 24px;
  }

  .namebox input {
    width: 100px;
  }

  .formula button {
    width: 60px;
    display: flex;
    justify-content: center;
  }

  .namebox + button {
    margin-left: 8px;
  }

  .formula .fx {
    font: italic 32px "Liberation Serif", serif;
    color: #a0a0a0;
  }

  .entry {
    flex: 1;
    height: 38px;
    background: #383838;
  }

  .formula .expand {
    width: 30px;
  }

  /* sheet */
  .sheet {
    flex: 1;
    min-height: 0;
    overflow: hidden;
    background: #fff;
    color: #111;
    font-family: "Noto Sans", "Noto Sans CJK KR", sans-serif;
    font-size: 13px;
    border-top: 6px double #aaa;
  }

  .canvas {
    position: relative;
    width: max-content;
  }

  table {
    width: 0;
    table-layout: fixed;
    border-collapse: collapse;
    line-height: 16px;
  }

  .gutter {
    width: 29px;
  }

  th,
  td {
    box-sizing: border-box;
    padding: 0;
    height: 22px;
    white-space: nowrap;
    text-align: left;
  }

  td {
    padding: 0 3px;
  }

  thead th,
  tbody th {
    background: #161616;
    color: #fff;
    font-size: 16px;
    font-weight: 500;
    text-align: center;
  }

  thead th {
    height: 28px;
    border-right: 2px solid #555;
    border-bottom: 2px solid #b8b8b8;
  }

  thead .corner {
    border-right-color: #b8b8b8;
  }

  .corner svg {
    margin: 6px 0 0 10px;
  }

  thead .first {
    padding-right: 14px;
  }

  thead .picked {
    background: #5a5a5a;
    border-bottom-color: #3c7549;
  }

  tbody th {
    border-right: 2px solid #b0b0b0;
    border-bottom: 2px solid #555;
    vertical-align: bottom;
  }

  tbody .picked {
    background: #5a5a5a;
    border-right-color: #3c7549;
  }

  .tall th,
  .tall td {
    height: 43px;
  }

  .short th,
  .short td {
    height: 18px;
  }

  .banner {
    background: #262626;
  }

  .banner-line {
    border-bottom: 2px solid #000;
  }

  .title {
    padding-left: 6px;
    font-size: 20px;
    font-weight: 500;
    color: #fff;
  }

  .logo {
    padding: 0;
  }

  .logo div {
    display: flex;
    flex-direction: column;
    justify-content: center;
    width: 67px;
    height: 32px;
    box-sizing: border-box;
    border: 1px dashed #ccc;
    border-left: none;
    color: #fff;
  }

  .logo small {
    font-size: 6px;
    line-height: 10px;
  }

  .logo b {
    font-family: Inter, sans-serif;
    font-size: 13px;
    font-weight: 600;
    line-height: 16px;
  }

  .dark {
    border-top: 2px solid #7f7f7f;
    border-bottom: 2px solid #7f7f7f;
    border-right: 2px dotted #fff;
    background: #404040;
    color: #fff;
    font-weight: 600;
    text-align: center;
  }

  .data {
    border-bottom: 2px dotted #e0e0e0;
    border-right: 2px dotted #e0e0e0;
    color: #444;
    text-align: center;
  }

  .data.last {
    border-right: none;
  }

  td.first {
    padding-right: 17px;
  }

  .bold {
    font-weight: 700;
  }

  .indent {
    padding-left: 4px;
  }

  .pivot {
    border: 2px solid #7f7f7f;
  }

  .head {
    background: #bfbfbf;
    font-weight: 700;
  }

  .label {
    background: #f2f2f2;
  }

  .num {
    padding: 0 1px;
    text-align: right;
  }

  .orange {
    background: #e99c57;
  }

  .filter {
    display: flex;
    align-items: center;
    justify-content: space-between;
    height: 20px;
    margin-right: -3px;
  }

  .filter button {
    display: grid;
    place-items: center;
    width: 21px;
    height: 20px;
    border: 1px solid #999;
    background: #fff;
  }

  .key {
    border-top: 2px solid #7f7f7f;
    border-bottom: 2px solid #7f7f7f;
    background: #595959;
    color: #fff;
    font-weight: 700;
    text-align: center;
  }

  .value {
    border-top: 2px solid #7f7f7f;
    border-bottom: 2px solid #7f7f7f;
    background: #f2f2f2;
  }

  .center {
    text-align: center;
  }

  .rule {
    border: 2px solid #d9d9d9;
    border-left: none;
  }

  .rule:not(.center) {
    border-right: none;
  }

  .note {
    padding-right: 14px;
    text-align: right;
  }

  .calc {
    border-bottom: 2px dotted #d9d9d9;
    border-right: 2px dotted #d9d9d9;
    color: #444;
    text-align: center;
  }

  .calc.label {
    border-right: 2px solid #bfbfbf;
  }

  .green {
    background: #a3bd69;
    border-color: #fff;
  }

  .total {
    background: #d9d9d9;
  }

  .calc.total {
    border-right-color: #fff;
  }

  .sum {
    border-top: 3px solid #000;
  }

  .edge {
    border-left: 3px solid #000;
    border-right: none;
  }

  .divide {
    border-left: 2px dotted #000;
  }

  .split {
    border-left: 2px dotted #bbb;
  }

  .step-line {
    border-top: 2px dotted #bbb;
  }

  .cursor {
    position: relative;
  }

  .cursor span {
    position: absolute;
    inset: -3px -2px;
    border: 4px solid #3c7549;
  }

  .cursor span::after {
    content: "";
    position: absolute;
    right: -6px;
    bottom: -6px;
    width: 10px;
    height: 10px;
    border: 2px solid #fff;
    border-width: 2px 0 0 2px;
    background: #3c7549;
  }

  .chart {
    position: absolute;
    left: 303px;
    top: 235px;
    font-size: 12px;
  }

  .chart text {
    fill: #595959;
  }

  .box {
    position: absolute;
    display: flex;
    align-items: center;
    box-sizing: border-box;
    border: 1px solid #7f7f7f;
    background: #fff;
    color: #111;
  }

  .pvalue {
    left: 844px;
    top: 322px;
    width: 454px;
    height: 42px;
    justify-content: center;
  }

  .expected {
    left: 1370px;
    top: 260px;
    width: 325px;
    height: 78px;
    flex-direction: column;
    justify-content: center;
    align-items: flex-start;
    gap: 4px;
    padding-left: 8px;
  }

  .chi {
    left: 1752px;
    top: 262px;
    width: 341px;
    height: 79px;
    justify-content: center;
    gap: 14px;
  }

  .fraction {
    display: flex;
    flex-direction: column;
    align-items: center;
    line-height: 16px;
  }

  .fraction span:first-child {
    padding: 0 5px;
    border-bottom: 3px solid #000;
  }

  .fraction sup {
    font-size: 9px;
    line-height: 0;
  }

  /* sheet tabs */
  .tabs {
    flex: none;
    display: flex;
    align-items: flex-start;
    height: 53px;
    box-sizing: border-box;
    border-top: 2px solid #666;
    border-bottom: 1px solid #000;
    background: #323232;
    font-size: 24px;
  }

  .arrows {
    display: flex;
    align-items: center;
    gap: 32px;
    width: 121px;
    height: 50px;
    box-sizing: border-box;
    padding-left: 30px;
  }

  .tab {
    height: 50px;
    padding-top: 6px;
    border-left: 2px solid #555;
    background: #212121;
    color: #7a7a7a;
  }

  .one {
    width: 159px;
  }

  .two {
    width: 253px;
  }

  .three {
    width: 240px;
    border-right: 2px solid #555;
  }

  .tab.active {
    height: 43px;
    margin-top: -2px;
    padding-top: 4px;
    border: none;
    border-radius: 0 0 6px 6px;
    background: #fff;
    color: #3f7f56;
    font-size: 26px;
  }

  .add {
    display: grid;
    place-items: center;
    width: 75px;
    height: 42px;
    padding-top: 6px;
    border-right: 2px solid #555;
  }

  /* status bar */
  .status {
    flex: none;
    display: flex;
    align-items: center;
    height: 45px;
    box-sizing: border-box;
    padding-bottom: 1px;
    background: linear-gradient(#4a4a4a, #3a3a3a);
    font-size: 23px;
    color: #fff;
  }

  .ready {
    margin: 0 40px 0 48px;
  }

  .access {
    display: flex;
    align-items: center;
    gap: 6px;
    margin-left: 34px;
  }

  .views {
    display: flex;
    height: 100%;
    margin-left: auto;
  }

  .views button {
    display: grid;
    place-items: center;
    width: 71px;
  }

  .views .on {
    width: 75px;
    background: #5a5a5a;
  }

  .step {
    margin: 0 14px;
  }

  input[type="range"] {
    appearance: none;
    width: 200px;
    height: 32px;
  }

  input[type="range"]::-webkit-slider-runnable-track {
    height: 8px;
    border-radius: 4px;
    background: radial-gradient(#444 3px, #787878 4px);
  }

  input[type="range"]::-webkit-slider-thumb {
    appearance: none;
    width: 32px;
    height: 32px;
    margin-top: -12px;
    border-radius: 50%;
    background: #a5a5a5;
  }

  .zoom-value {
    box-sizing: border-box;
    width: 136px;
    padding-left: 28px;
  }
</style>
